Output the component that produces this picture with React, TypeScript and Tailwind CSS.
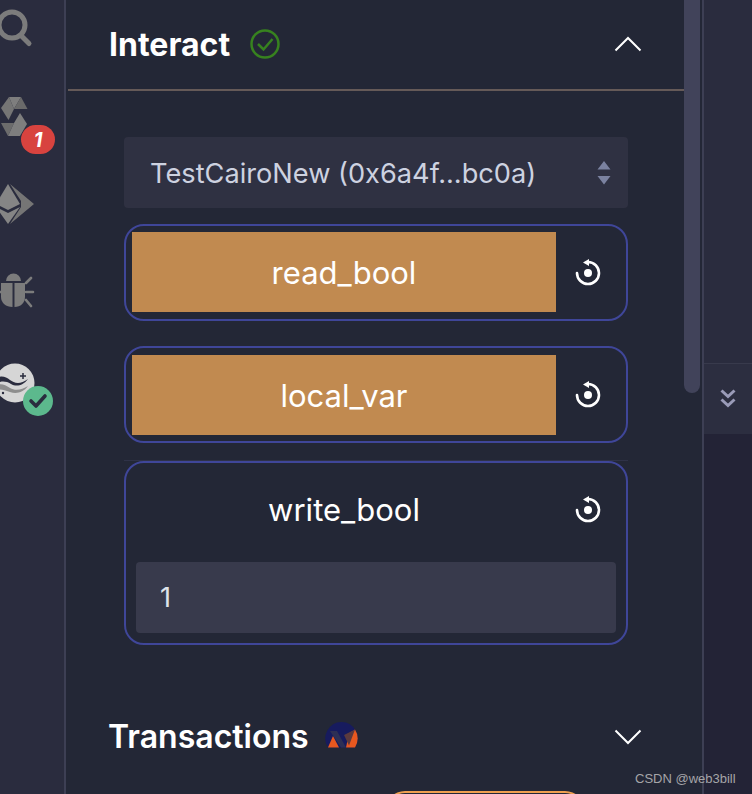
import { FC, ReactNode } from "react";

const inter = "font-['Inter',sans-serif]";

const Chevron: FC<{ up?: boolean }> = ({ up }) => (
  <svg width="28" height="16" viewBox="0 0 28 16" fill="none" stroke="#ffffff" strokeWidth="2" className="block">
    <path d={up ? "M1.5 14.5 14 2l12.5 12.5" : "M1.5 1.5 14 14 26.5 1.5"} />
  </svg>
);

const ReplayIcon = () => (
  <svg width="26" height="28" viewBox="0 0 26 28" fill="none" className="block">
    <path d="M13 3a11 11 0 1 1-11 11" stroke="#ffffff" strokeWidth="2.6" strokeLinecap="round" />
    <path d="M14 0v7L8 3.500z" fill="#ffffff" />
    <circle cx="13" cy="14" r="4" fill="#ffffff" />
  </svg>
);

const SearchIcon = () => (
  <svg width="36" height="40" viewBox="0 0 36 40" fill="none" stroke="#7c7c7c" strokeWidth="5" strokeLinecap="round" className="block">
    <circle cx="14" cy="16" r="13" />
    <path d="M23.500 27l7.500 7.500" />
  </svg>
);

const SolidityIcon = () => (
  <svg width="28" height="42" viewBox="0 0 28 42" className="block">
    <path d="M9 1h12L14 13z" fill="#7e7e7e" />
    <path d="M21 1l6.500 12H14z" fill="#6a6a6a" />
    <path d="M9 1 1 12l7.500 12L14 13z" fill="#757575" />
    <path d="M1 27h13l-6 13z" fill="#6c6c6c" />
    <path d="M20 17l7 11-7 12H8l6-13z" fill="#7e7e7e" />
  </svg>
);

const EthIcon = () => (
  <svg width="40" height="42" viewBox="0 0 40 42" className="block">
    <path d="M8 1l12 20-12 6-12-6z" fill="#858585" />
    <path d="M-4 24l12 6 12-6-12 17z" fill="#858585" />
    <path d="M10 1l24 20-24 20 11-17 0-6z" fill="#757575" />
  </svg>
);

const BugIcon = () => (
  <svg width="36" height="38" viewBox="0 0 36 38" fill="none" className="block">
    <path d="M7 9a7.500 7.500 0 0 1 15 0z" fill="#7c7c7c" />
    <path d="M2 11h11.500v24C7 35 2 31 2 25z" fill="#7c7c7c" />
    <path d="M15.500 11H26v14c0 6-4.500 10-10.500 10z" fill="#7c7c7c" />
    <path d="M27 11l5-5M27 20h7M27 28l5 6M2 20h-3" stroke="#7c7c7c" strokeWidth="2.600" strokeLinecap="round" />
  </svg>
);

const CairoIcon = () => (
  <svg width="40" height="40" viewBox="0 0 40 40" className="block">
    <circle cx="19" cy="20" r="19.500" fill="#d6d6d6" />
    <path d="M0 15c6-3 10-1 14 2s10 5 18-1c-5 7-12 8-17 5S6 18 0 20z" fill="#2a2c3e" />
    <path d="M0 22c6-2 9 0 14 3s12 2 18-2c-5 7-12 8-18 6S5 26 1 27z" fill="#8e8e8e" />
    <path d="M27 10v6M24 13h6" stroke="#2a2c3e" strokeWidth="1.500" />
    <circle cx="7" cy="30" r="1.200" fill="#2a2c3e" />
  </svg>
);

const SideSlot: FC<{ className: string; children: ReactNode }> = ({ className, children }) => (
  <div className={`relative ${className}`}>{children}</div>
);

const Sidebar = () => (
  <aside className="flex h-full w-[66px] shrink-0 flex-col overflow-hidden border-r-2 border-[#3d3f54] bg-[#2a2c3e]">
    <SideSlot className="mt-[9px] ml-[-2px]">
      <SearchIcon />
    </SideSlot>
    <SideSlot className="mt-[47px] ml-[0px]">
      <SolidityIcon />
      <span className="absolute left-[21px] top-[29px] flex h-[29px] w-[34px] items-center justify-center rounded-full bg-[#d8433f] font-['Inter',sans-serif] text-[20px] font-bold italic text-white">
        1
      </span>
    </SideSlot>
    <SideSlot className="mt-[45px] ml-[0px]">
      <EthIcon />
    </SideSlot>
    <SideSlot className="mt-[47px] ml-[-1px]">
      <BugIcon />
    </SideSlot>
    <SideSlot className="mt-[53px] ml-[-4px]">
      <CairoIcon />
      <span className="absolute left-[27px] top-[23px] flex h-[30px] w-[30px] items-center justify-center rounded-full bg-[#5cb98d]">
        <svg width="20" height="16" viewBox="0 0 20 16" fill="none" stroke="#2a2c3e" strokeWidth="3.600" strokeLinecap="round" strokeLinejoin="round">
          <path d="M3 8l5 5 9-10" />
        </svg>
      </span>
    </SideSlot>
  </aside>
);

const OrangeCard: FC<{ label: string; className: string; barClass: string }> = ({ label, className, barClass }) => (
  <div className={`flex h-[97px] items-center rounded-[20px] border-2 border-[#3f4699] pl-[6px] pr-[6px] ${className}`}>
    <div className={`flex h-[80px] w-[424px] items-center justify-center bg-[#c18a50] text-[31px] text-white ${barClass}`}>
      {label}
    </div>
    <div className="flex flex-1 items-center justify-center">
      <ReplayIcon />
    </div>
  </div>
);

const App = () => (
  <div className={`relative flex h-[794px] w-[752px] overflow-hidden bg-[#232736] ${inter}`}>
    <Sidebar />

    <main className="flex h-full w-[618px] shrink-0 flex-col pl-[2px]">
      <header className="flex h-[91px] shrink-0 items-center justify-between border-b-2 border-[#655a58] pb-[2px] pl-[41px] pr-[42px]">
        <div className="flex items-center gap-[20px]">
          <h2 className="pt-[2px] text-[32px] font-bold leading-none text-white">Interact</h2>
          <svg width="30" height="30" viewBox="0 0 30 30" fill="none" stroke="#37821f" strokeWidth="2.500">
            <circle cx="15" cy="15" r="13.500" />
            <path d="M8 15l5.500 5.500L22.500 10" />
          </svg>
        </div>
        <Chevron up />
      </header>

      <div className="flex flex-col pl-[56px] pr-[56px] pt-[46px]">
        <div className="flex h-[71px] items-center justify-between rounded-[4px] bg-[#2f3142] pl-[26px] pr-[17px] text-[27.200px] text-[#cdd2e0]">
          <span className="pt-[3px]">TestCairoNew (0x6a4f...bc0a)</span>
          <svg width="14" height="24" viewBox="0 0 14 24" fill="#7b82a0">
            <path d="M7 0l6.500 8.500H.5zM.5 15h13L7 23.500z" />
          </svg>
        </div>

        <OrangeCard label="read_bool" className="mt-[16px]" barClass="mb-[1px] pt-[2px]" />
        <OrangeCard label="local_var" className="mt-[25px]" barClass="pt-[4px]" />

        <div className="mt-[17px] h-px bg-[#2f3248]" />
        <div className="flex h-[184px] flex-col rounded-[20px] border-2 border-[#3f4699] px-[10px]">
          <div className="flex h-[99px] shrink-0 items-center pb-[5px]">
            <div className="w-[416px] text-center text-[31px] text-white">write_bool</div>
            <div className="flex flex-1 items-center justify-center pl-[8px]">
              <ReplayIcon />
            </div>
          </div>
          <div className="flex h-[71px] items-center rounded-[4px] bg-[#383a4c] pl-[24px] pt-[2px] text-[27.200px] text-[#dfe2ea]">
            1
          </div>
        </div>

        <div className="ml-[-16px] mr-[-14px] mt-[75px] flex items-center justify-between">
          <div className="flex items-center gap-[16px]">
            <h2 className="pt-[1px] text-[32px] font-semibold leading-none text-white">Transactions</h2>
            <svg width="33" height="26" viewBox="0 0 33 26" className="mt-[-3px]">
              <path d="M16.500 0a16.500 16.500 0 0 1 13.500 25.500H3A16.500 16.500 0 0 1 16.500 0z" fill="#171b5e" />
              <path d="M30 7.500a16.500 16.500 0 0 1 0 18h-9l3-14z" fill="#e8581f" />
              <path d="M8 14l6 11.500H3z" fill="#e8581f" />
              <path d="M19 13l11-5.500-6 16z" fill="#5b3a3e" />
              <path d="M5 9h7l9 16.500h-5z" fill="#2d2f55" />
            </svg>
          </div>
          <Chevron />
        </div>
      </div>

      <div className="ml-[317px] mt-[38px] h-[20px] w-[200px] shrink-0 rounded-t-[24px] border-2 border-[#f0a050]" />
    </main>

    <div className="flex w-[16px] shrink-0 flex-col">
      <div className="h-[393px] w-full rounded-b-[8px] bg-[#41435a]" />
    </div>

    <div className="ml-[2px] flex flex-1 flex-col border-l-2 border-[#3d3f54]">
      <div className="h-[363px] bg-[#2a2c3e]" />
      <div className="flex h-[71px] items-center justify-center border-t border-[#383a4c] bg-[#2c2e40] pr-[1px]">
        <svg width="16" height="20" viewBox="0 0 16 20" fill="none" stroke="#9a9bb8" strokeWidth="3">
          <path d="M1.500 1.500 8 7.500l6.500-6M1.500 10.500 8 16.500l6.500-6" />
        </svg>
      </div>
      <div className="flex-1 bg-[#232336]" />
    </div>

    <span className="absolute bottom-[9px] left-[635px] font-['Liberation_Sans',sans-serif] text-[13px] leading-none text-[#a5a5a8]">
      CSDN @web3bill
    </span>
  </div>
);

export default App;
